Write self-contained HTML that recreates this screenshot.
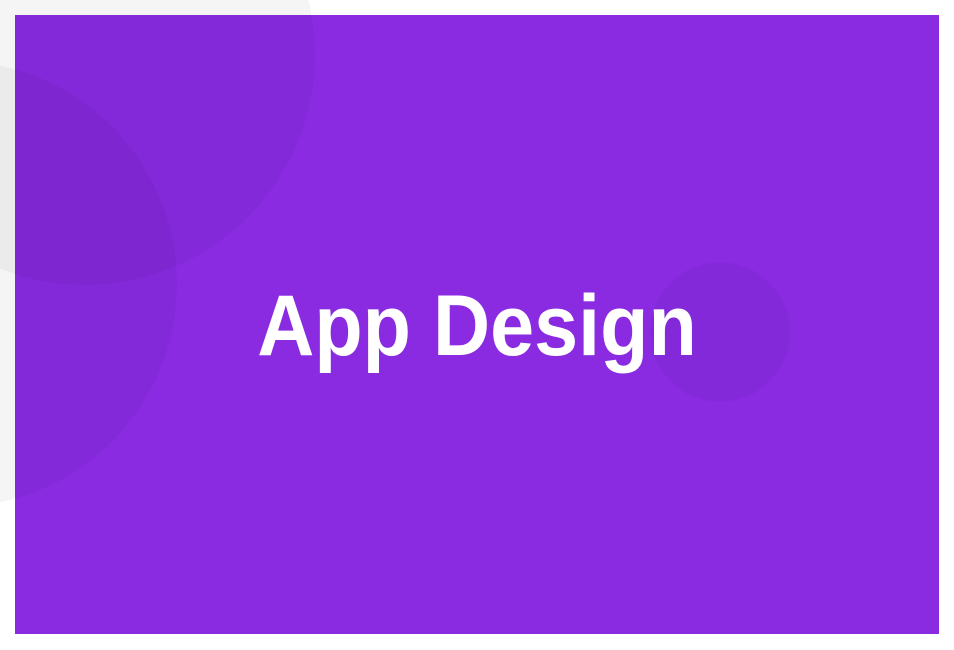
<!DOCTYPE html>
<html><head><style>
html,body{margin:0;padding:0;width:954px;height:650px;overflow:hidden;background:#fff;position:relative}
.c{position:absolute;border-radius:50%;background:rgba(0,0,0,0.04)}
.card{position:absolute;left:15px;top:15px;width:924px;height:619px;background:#8a2be2}
.t{position:absolute;left:0;width:954px;top:276px;text-align:center;color:#fff;font:bold 86px "Liberation Sans",sans-serif;line-height:100px;transform:scaleX(0.92);transform-origin:477px 0}
</style></head><body>
<div class="card"></div>
<div class="c" style="left:-145px;top:-175px;width:460px;height:460px"></div>
<div class="c" style="left:-267px;top:61px;width:444px;height:446px"></div>
<div class="c" style="left:650px;top:262px;width:140px;height:140px"></div>
<div class="t">App Design</div>
</body></html>
